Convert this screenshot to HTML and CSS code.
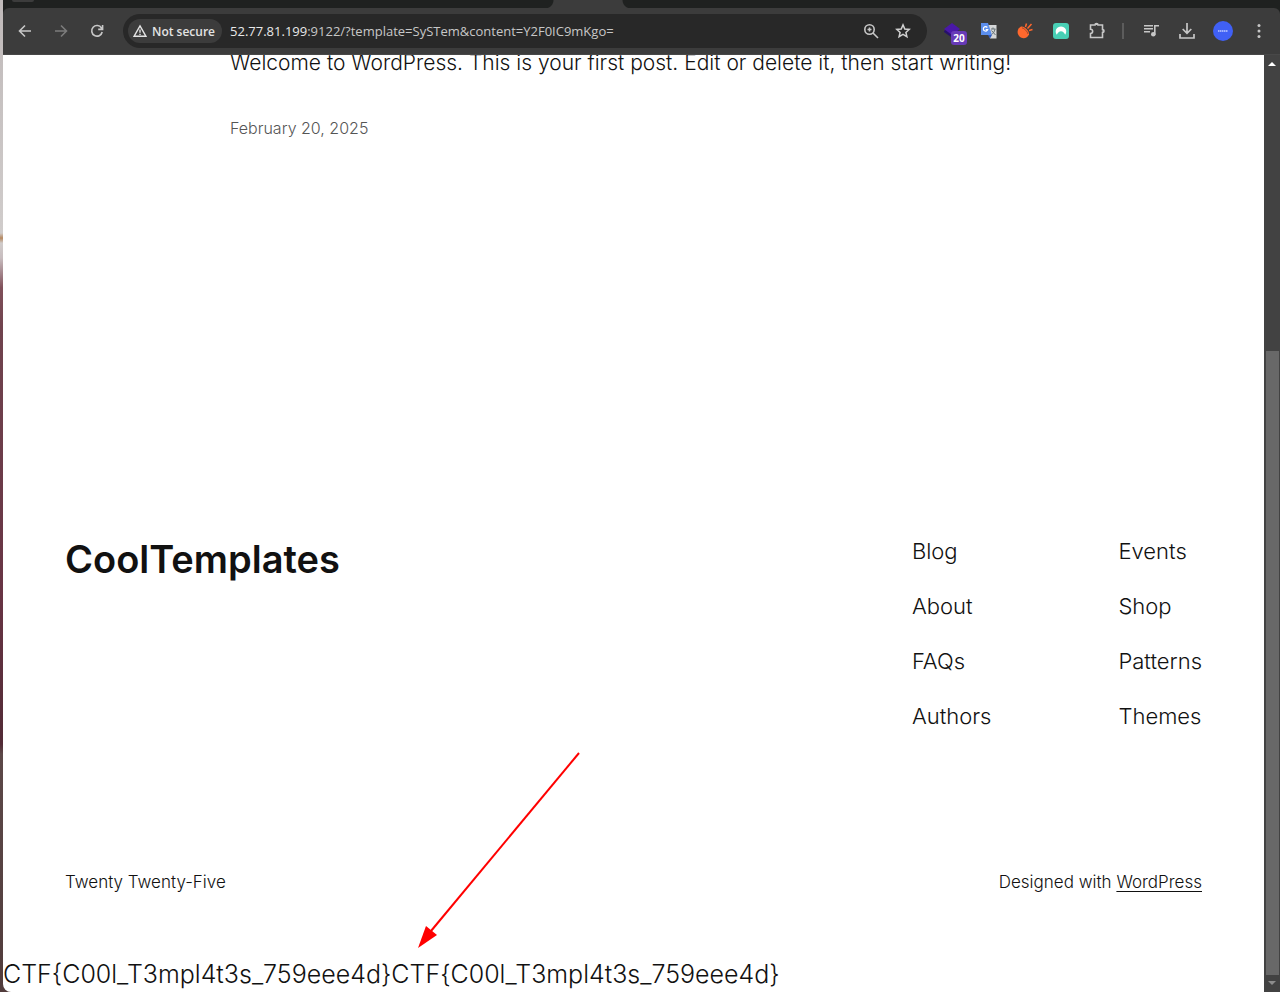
FILE: index.html
```html
<!DOCTYPE html>
<html lang="en">
<head>
<meta charset="utf-8">
<meta name="viewport" content="width=device-width, initial-scale=1">
<title>CoolTemplates</title>
<link rel="stylesheet" href="styles.css">
</head>
<body>
<div class="window">
  <div class="chrome">
  <div class="tabstrip"><span class="tab-search"></span><span class="active-tab"></span></div>
  <header class="toolbar">
    <div class="nav">
      <button class="icon-btn" aria-label="Back"><svg width="16" height="16" viewBox="0 0 16 16" fill="none" stroke="#c7c7c7" stroke-width="1.6"><path d="M14 8H3M8 2.500L2.500 8L8 13.500"/></svg></button>
      <button class="icon-btn" aria-label="Forward"><svg width="16" height="16" viewBox="0 0 16 16" fill="none" stroke="#7c7c7c" stroke-width="1.6"><path d="M2 8H13M8 2.500L13.500 8L8 13.500"/></svg></button>
      <button class="icon-btn" aria-label="Reload"><svg width="16" height="16" viewBox="0 0 16 16" fill="none" stroke="#c7c7c7" stroke-width="1.6"><path d="M13.200 9A5.300 5.300 0 1 1 12.500 5L13.500 6.500M13.600 2V6.400H9.200"/></svg></button>
    </div>
    <div class="omnibox">
      <button class="security"><svg width="14" height="14" viewBox="0 0 14 14" fill="none" stroke="#e3e3e3" stroke-width="1.4"><path d="M7 1.800L13 12.300H1ZM7 5.500V8.700M7 9.700V11"/></svg>Not secure</button>
      <div class="url"><b>52.77.81.199</b>:9122/?template=SySTem&amp;content=Y2F0IC9mKgo=</div>
      <button class="icon-btn" aria-label="Zoom"><svg width="16" height="16" viewBox="0 0 16 16" fill="none" stroke="#c7c7c7" stroke-width="1.6"><circle cx="6.500" cy="6.500" r="4.700"/><path d="M10 10L15 15M6.500 4.500V8.500M4.500 6.500H8.500"/></svg></button>
      <button class="icon-btn" aria-label="Bookmark"><svg width="16" height="16" viewBox="0 0 16 16" fill="none" stroke="#d0d0d0" stroke-width="1.5"><path d="M8 1.900L9.800 6L14.200 6.400L10.900 9.400L11.900 13.700L8 11.400L4.100 13.700L5.100 9.400L1.800 6.400L6.200 6Z"/></svg></button>
    </div>
    <div class="extensions">
      <button class="icon-btn badge-host" aria-label="Extension, 20 items"><svg width="20" height="20" viewBox="0 0 20 20"><path d="M1 10L8 5L16 10V12L8 16L1 11Z" fill="#27106b"/><path d="M9 2L17 8L9 14L1 8Z" fill="#4a18a8"/></svg><span class="badge">20</span></button>
      <button class="icon-btn" aria-label="Translate"><svg width="18" height="18" viewBox="0 0 18 18"><path d="M7 3H16.500V16.500H10Z" fill="#d5d7d8"/><path d="M1 1H8L12 13H1Z" fill="#5b8eed"/><path d="M8 13H12L10 16.500Z" fill="#315cc1"/><path d="M7.300 5.500A2.200 2.200 0 1 0 7.700 7.500H5.700" fill="none" stroke="#fff" stroke-width="1.200"/><path d="M11 7H15.500M13 5.500V7M15 7C14.500 10 13 11.500 11.500 12.500M11.500 8.500L15.500 13" fill="none" stroke="#657176"/></svg></button>
      <button class="icon-btn" aria-label="Orange extension"><svg width="18" height="18" viewBox="0 0 18 18"><path d="M5 4.500C8 3.500 13.500 9 13 12.200C11.500 16.500 6.500 17.500 3.500 14.500C.500 11.500 1 6.500 5 4.500Z" fill="#ff682d"/><path d="M6 5.800C8.500 6.500 11.500 9.500 12 12" fill="none" stroke="#a64b2b"/><path d="M9.500 5L10.500 1.500M11.500 6.500L15.500 2M13 8.500L16.500 7.500" stroke="#ff682d" stroke-width="1.500"/></svg></button>
      <button class="icon-btn" aria-label="VPN"><svg width="16" height="16" viewBox="0 0 16 16"><rect width="16" height="16" rx="3" fill="#48cfb5"/><path d="M3.800 11.800C1 7.500 4 3.500 8 3.500S15 7.500 12.200 11.800C11 9.500 10 8.200 8 8.200S5 9.500 3.800 11.800Z" fill="#fff"/></svg></button>
      <button class="icon-btn" aria-label="Extensions"><svg width="18" height="18" viewBox="0 0 18 18"><path d="M2.500 3H7A1.500 1.500 0 0 1 10 3H14.500V7.500A1.500 1.500 0 0 1 14.500 10.500V15.500H2.500V11.500A2.100 2.100 0 0 0 2.500 7.200Z" fill="none" stroke="#c7c7c7" stroke-width="1.600"/><path d="M7 3A1.500 1.500 0 0 1 10 3ZM14.500 7.500A1.500 1.500 0 0 1 14.500 10.500Z" fill="#c7c7c7"/></svg></button>
    </div>
    <span class="divider"></span>
    <div class="tools">
      <button class="icon-btn" aria-label="Media"><svg width="18" height="18" viewBox="0 0 18 18"><path d="M2 3.800H11M2 6.800H11M2 9.800H8M12.800 12.500V3.800H17" fill="none" stroke="#c7c7c7" stroke-width="1.600"/><circle cx="11.300" cy="12.200" r="2.300" fill="#c7c7c7"/></svg></button>
      <button class="icon-btn" aria-label="Downloads"><svg width="18" height="18" viewBox="0 0 18 18" fill="none" stroke="#c7c7c7" stroke-width="1.700"><path d="M9 1V11M4.700 7L9 11.300L13.300 7M2 12V16H16V12"/></svg></button>
      <button class="icon-btn" aria-label="Profile"><svg width="20" height="20" viewBox="0 0 20 20"><circle cx="10" cy="10" r="10" fill="#4060f5"/><path d="M5 10H15" stroke="#c0ccff" stroke-width="1.500" stroke-dasharray="1.500 .5"/></svg></button>
      <button class="icon-btn" aria-label="Menu"><svg width="16" height="16" viewBox="0 0 16 16" fill="#c7c7c7"><circle cx="8" cy="2.500" r="1.500"/><circle cx="8" cy="8" r="1.500"/><circle cx="8" cy="13.500" r="1.500"/></svg></button>
    </div>
  </header>
  </div>
  <div class="viewport">
    <div class="page">
      <main class="post">
        <p class="excerpt">Welcome to WordPress. This is your first post. Edit or delete it, then start writing!</p>
        <time class="date" datetime="2025-02-20">February 20, 2025</time>
      </main>
      <footer class="footer">
        <div class="footer-top">
          <h2 class="site-title">CoolTemplates</h2>
          <nav class="links">
            <ul><li><a href="#">Blog</a></li><li><a href="#">About</a></li><li><a href="#">FAQs</a></li><li><a href="#">Authors</a></li></ul>
            <ul><li><a href="#">Events</a></li><li><a href="#">Shop</a></li><li><a href="#">Patterns</a></li><li><a href="#">Themes</a></li></ul>
          </nav>
        </div>
        <div class="credits"><span>Twenty Twenty-Five</span><span>Designed with <a class="underlined" href="#">WordPress</a></span></div>
      </footer>
      <p class="output">CTF{C00l_T3mpl4t3s_759eee4d}CTF{C00l_T3mpl4t3s_759eee4d}</p>
      <svg class="arrow" width="164" height="198" viewBox="0 0 164 198"><path d="M161 2L13 180" stroke="#f00" stroke-width="2"/><path d="M0 197L8 175L19 184Z" fill="#f00"/></svg>
    </div>
    <div class="scrollbar">
      <svg width="16" height="16" viewBox="0 0 16 16"><path d="M4 11L8 7L12 11Z" fill="#fff"/></svg>
      <div class="track"><div class="thumb"></div></div>
      <svg width="16" height="17" viewBox="0 0 16 17"><path d="M4 6H12L8 10Z" fill="#8c8c8c"/></svg>
    </div>
  </div>
</div>
</body>
</html>
```
FILE: styles.css
```css
* { box-sizing: border-box; }
body {
  margin: 0;
  padding-left: 3px;
  font-family: Inter, "Liberation Sans", sans-serif;
  font-weight: 300;
  color: #111;
  background: linear-gradient(#c0baba 0, #d0cccb 23.5%, #b5875f 24%, #d0cccb 24.5%, #c8bdbf 26%, #80505a 29%, #70434e 33%, #683444 60%, #522b36 75%, #5c4848 76%, #513c3c 100%);
}
p, h2, ul { margin: 0; padding: 0; }
ul { list-style: none; }
a { color: inherit; text-decoration: none; }
button { border: 0; padding: 0; background: none; color: inherit; font: inherit; }

.window {
  display: flex;
  flex-direction: column;
  min-height: 100vh;
  overflow: hidden;
  border-radius: 0 0 0 8px;
  background: #fff;
}
.chrome { background: #1f2120; }
.tabstrip { display: flex; height: 8px; }
.tab-search { width: 22px; height: 2px; margin-left: 9px; border-radius: 0 0 8px 8px; background: #3c3c3c; }
.active-tab {
  width: 86px;
  margin-left: 511px;
  background:
    radial-gradient(circle at 0 0, #1f2120 8px, transparent 9px),
    radial-gradient(circle at 100% 0, #1f2120 8px, transparent 9px),
    #3c3c3c;
}
.toolbar {
  display: flex;
  align-items: center;
  height: 47px;
  padding-right: 9px;
  border-bottom: 1px solid #484848;
  border-radius: 6px 6px 0 0;
  background: #3c3c3c;
}
.icon-btn { display: grid; place-items: center; width: 24px; height: 24px; flex: none; }
.nav { display: flex; gap: 12px; padding-left: 10px; }
.omnibox {
  display: flex;
  align-items: center;
  flex: 1;
  gap: 8px;
  height: 34px;
  margin-left: 14px;
  padding: 0 12px 0 5px;
  border-radius: 17px;
  background: #282828;
  font-family: "Open Sans", "Noto Sans", sans-serif;
  font-size: 13px;
  color: #c7c7c7;
}
.security {
  display: flex;
  align-items: center;
  gap: 5px;
  height: 24px;
  padding: 0 7px 0 5px;
  border-radius: 12px;
  background: #3c3c3c;
  color: #e3e3e3;
  font-size: 12px;
  font-weight: 600;
}
.url { flex: 1; font-weight: 400; white-space: nowrap; }
.url b { font-weight: 400; color: #e8e8e8; }
.extensions { display: flex; gap: 12px; margin-left: 14px; }
.badge-host { position: relative; }
.badge {
  position: absolute;
  top: 12px;
  left: 10px;
  width: 16px;
  height: 14px;
  border-radius: 3px;
  background: #673ab7;
  color: #fff;
  font: 700 10px/14px "Noto Sans", sans-serif;
  text-align: center;
}
.divider { width: 2px; height: 16px; margin: 0 15px 0 13px; background: #5c5c5c; }
.tools { display: flex; gap: 12px; }

.viewport { display: flex; flex: 1; }
.page { position: relative; display: flex; flex: 1; flex-direction: column; overflow: hidden; }
.post { padding: 0 227px; }
.excerpt { font-size: 21px; line-height: 16px; white-space: nowrap; }
.date { display: block; margin-top: 43px; font-size: 16px; line-height: 28px; color: #555; }
.footer { margin-top: auto; padding: 0 62px; }
.footer-top { display: flex; justify-content: space-between; }
.site-title { font-size: 38px; line-height: 46px; font-weight: 600; }
.links { display: flex; gap: 127px; font-size: 22px; line-height: 31px; }
.links ul { display: grid; gap: 24px; }
.credits { display: flex; justify-content: space-between; margin-top: 136px; font-size: 17px; line-height: 28px; }
.underlined { text-decoration: underline; text-decoration-thickness: 1px; text-underline-offset: 3px; }
.output { margin-top: 61px; font-size: 25px; line-height: 35px; }
.arrow { position: absolute; left: 415px; bottom: 43px; }

.scrollbar { display: flex; flex-direction: column; width: 16px; background: #424242; }
.track { display: flex; flex: 1; align-items: flex-end; padding: 0 1px 0 2px; }
.thumb { width: 100%; height: 69%; background: #686868; }
```
